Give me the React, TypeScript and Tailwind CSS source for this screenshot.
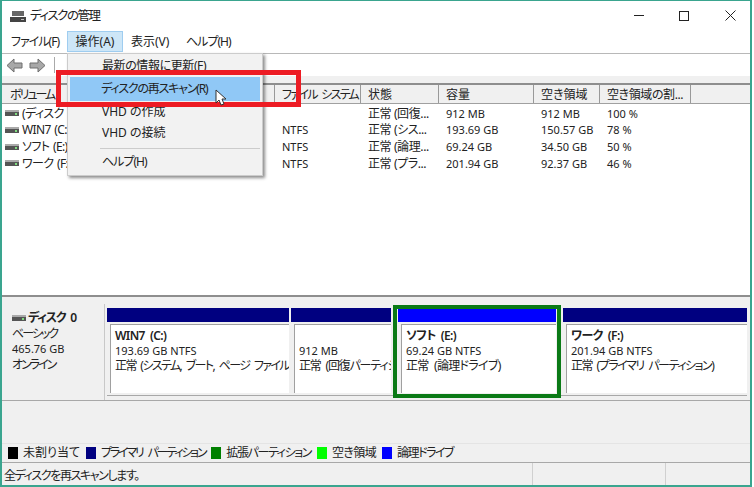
const font = { fontFamily: '"Noto Sans", "Noto Sans CJK JP", sans-serif' };

const columns = [
  { label: "ボリューム", width: "w-[272px]", track: "tracking-[-2px]" },
  { label: "ファイル システム", width: "w-[86px]", track: "tracking-[-1.7px] [word-spacing:3px]" },
  { label: "状態", width: "w-[78px]", track: "" },
  { label: "容量", width: "w-[95px]", track: "" },
  { label: "空き領域", width: "w-[66px]", track: "" },
  { label: "空き領域の割...", width: "w-[91px]", track: "tracking-[-0.4px]" },
];

const rows = [
  ["(ディスク 0 パーティション 2)", "", "正常 (回復...", "912 MB", "912 MB", "100 %"],
  ["WIN7 (C:)", "NTFS", "正常 (シス...", "193.69 GB", "150.57 GB", "78 %"],
  ["ソフト (E:)", "NTFS", "正常 (論理...", "69.24 GB", "34.50 GB", "50 %"],
  ["ワーク (F:)", "NTFS", "正常 (プラ...", "201.94 GB", "92.37 GB", "46 %"],
];

const legend = [
  ["未割り当て", "bg-black", ""],
  ["プライマリ パーティション", "bg-[#000080]", "tracking-[-2.2px] [word-spacing:4px]"],
  ["拡張パーティション", "bg-[#008000]", "tracking-[-1.4px]"],
  ["空き領域", "bg-[#00ff00]", "tracking-[-0.6px]"],
  ["論理ドライブ", "bg-[#0000ff]", "tracking-[-1.5px]"],
];

const DriveIcon = () => (
  <svg width="14" height="8" viewBox="0 0 14 8" className="shrink-0">
    <rect x="0" y="1" width="14" height="6" fill="#555" />
    <rect x="0" y="1" width="14" height="2" fill="#aaa" />
    <rect x="10" y="4" width="2" height="2" fill="#7fdc7f" />
  </svg>
);

const NavArrow = ({ flip }: { flip?: boolean }) => (
  <svg width="17" height="15" viewBox="0 0 17 15" className={flip ? "-scale-x-100" : ""}>
    <path d="M1 7.5 8 1v4h8v5H8v4z" fill="#a8a8a8" stroke="#6e6e6e" strokeWidth="1" />
  </svg>
);

type PartitionProps = {
  name?: string;
  size: string;
  status: string;
  bar: string;
  width: string;
  track: string;
  selected?: boolean;
};

const Partition = ({ name, size, status, bar, width, track, selected }: PartitionProps) => (
  <div className={`${width} relative flex h-full shrink-0 flex-col`}>
    <div className={`${bar} h-[14px] shrink-0`} />
    <div className="ml-[3px] mt-[2px] h-[69px] overflow-hidden whitespace-pre border-t border-l border-[#a0a0a0] bg-white pl-[4px] pt-[3px] leading-[15px] text-[#222]">
      <div className="h-[15px] text-[12px] font-semibold tracking-[-0.6px]">{name}</div>
      <div className="text-[11px]">{size}</div>
      <div className={`text-[12px] ${track}`}>{status}</div>
    </div>
    {selected && <div className="absolute -left-[5px] -right-[5px] -top-[3px] h-[93px] border-[4px] border-[#0b7a16]" />}
  </div>
);

export default function App() {
  return (
    <div style={font} className="relative flex h-[487px] w-[752px] flex-col overflow-hidden border-x-2 border-t border-b-2 border-x-[#3aa58f] border-t-[#3aa58f] border-b-[#3aa58f] bg-white text-[12px] text-[#222] [font-feature-settings:'palt']">
      {/* title bar */}
      <div className="flex h-[29px] shrink-0 items-center pl-[8px]">
        <svg width="16" height="14" viewBox="0 0 16 14" className="mt-[2px]">
          <rect x="2" y="1" width="12" height="5" fill="#666" />
          <rect x="0" y="7" width="16" height="5" fill="#444" />
          <rect x="11" y="9" width="3" height="1" fill="#bbb" />
        </svg>
        <span className="ml-[4px] mt-[2px] text-[12.5px] tracking-[-1.5px]">ディスクの管理</span>
        <div className="-mr-[3px] ml-auto flex h-full items-center">
          <div className="flex w-[45px] justify-center"><div className="h-px w-[10px] bg-[#222]" /></div>
          <div className="flex w-[46px] justify-center"><div className="h-[10px] w-[10px] border border-[#222]" /></div>
          <div className="flex w-[46px] justify-center">
            <svg width="11" height="11" viewBox="0 0 11 11" stroke="#222" fill="none"><path d="M.5.5l10 10M10.5.5l-10 10" /></svg>
          </div>
        </div>
      </div>
      {/* menu bar */}
      <div className="flex h-[24px] shrink-0 items-center border-b border-[#b8b8b8] pl-[2px] text-[12px]">
        <span className="w-[63px] pl-[7px] tracking-[-1px]">ファイル(F)</span>
        <span className="flex h-[21px] w-[56px] items-center justify-center border border-[#9fcdf0] bg-[#cde6f7]">操作(A)</span>
        <span className="w-[55px] pl-[8px]">表示(V)</span>
        <span className="pl-[8px] tracking-[-1px]">ヘルプ(H)</span>
      </div>
      {/* toolbar */}
      <div className="flex h-[22px] shrink-0 items-center gap-[6px] pl-[4px]">
        <NavArrow />
        <NavArrow flip />
        <div className="ml-[2px] h-[16px] w-px bg-[#aaa]" />
      </div>
      <div className="h-[7px] shrink-0 bg-[#f0f0f0]" />
      {/* volume list */}
      <div className="h-[214px] shrink-0 border-y-2 border-[#8e8e8e] bg-white">
        <div className="flex h-[19px] items-center border-b border-[#a0a0a0] bg-[#f0f0f0] pl-[1px] text-[12px]">
          {columns.map((c) => (
            <div key={c.label} className={`${c.width} ${c.track} h-full shrink-0 overflow-hidden whitespace-nowrap border-r border-[#999] pl-[7px] leading-[19px]`}>
              {c.label}
            </div>
          ))}
        </div>
        <div className="pt-[1px]">
          {rows.map((r) => (
            <div key={r[0]} className="flex h-[16.67px] items-center pl-[3px] text-[11px] leading-[17px]">
              <div className="flex w-[270px] shrink-0 items-center gap-[3px]">
                <DriveIcon />
                <span className="text-[12px] tracking-[-0.6px] [word-spacing:1px]">{r[0]}</span>
              </div>
              <div className="w-[86px] shrink-0 pl-[7px]">{r[1]}</div>
              <div className="w-[78px] shrink-0 pl-[7px] text-[12px] tracking-[-0.4px]">{r[2]}</div>
              <div className="w-[95px] shrink-0 pl-[7px]">{r[3]}</div>
              <div className="w-[66px] shrink-0 pl-[7px]">{r[4]}</div>
              <div className="w-[91px] shrink-0 pl-[7px]">{r[5]}</div>
            </div>
          ))}
        </div>
      </div>
      {/* disk pane */}
      <div className="flex min-h-0 flex-1 flex-col bg-[#f0f0f0]">
        <div className="mt-[7px] flex h-[97px] shrink-0 border-b border-[#a8a8a8]">
          <div className="h-[96px] w-[103px] shrink-0 border-r border-[#c8c8c8] pl-[10px] pt-[6px] leading-[15.5px]">
            <div className="flex items-center gap-[2px] font-semibold">
              <DriveIcon />
              <span className="tracking-[-1.2px] [word-spacing:3px]">ディスク 0</span>
            </div>
            <div className="tracking-[-2px]">ベーシック</div>
            <div className="text-[11px]">465.76 GB</div>
            <div className="tracking-[-2px]">オンライン</div>
          </div>
          <div className="ml-[2px] mt-[4px] flex h-[88px] w-[640px] items-start border-b border-[#a8a8a8]">
            <Partition name="WIN7  (C:)" size="193.69 GB NTFS" status="正常 (システム, ブート, ページ ファイル" track="tracking-[-1.6px] [word-spacing:3px]" bar="bg-[#000080]" width="w-[182px]" />
            <Partition size="912 MB" status="正常 (回復パーティション)" track="tracking-[-1.2px] [word-spacing:3px]" bar="bg-[#000080]" width="ml-[2px] w-[100px]" />
            <Partition selected name="ソフト  (E:)" size="69.24 GB NTFS" status="正常 (論理ドライブ)" track="tracking-[-0.7px] [word-spacing:3px]" bar="bg-[#0000ff]" width="ml-[7px] w-[158px]" />
            <Partition name="ワーク  (F:)" size="201.94 GB NTFS" status="正常 (プライマリ パーティション)" track="tracking-[-1.5px] [word-spacing:3px]" bar="bg-[#000080]" width="ml-[7px] w-[184px]" />
          </div>
        </div>
        {/* legend */}
        <div className="mt-auto flex h-[20px] shrink-0 items-center gap-[6px] border-y border-y-[#a8a8a8] border-t-[#e4e4e4] pl-[6px] text-[12px]">
          {legend.map(([label, color, track]) => (
            <div key={label} className="flex items-center gap-[5px]">
              <div className={`${color} h-[12px] w-[10px]`} />
              <span className={track}>{label}</span>
            </div>
          ))}
        </div>
        {/* status bar */}
        <div className="flex h-[22px] shrink-0 items-center pl-[2px] text-[12px]">
          <span className="w-[528px] pt-[3px] tracking-[-1.4px]">全ディスクを再スキャンします。</span>
          <div className="h-full w-[133px] border-l border-[#d0d0d0]" />
          <div className="h-full flex-1 border-l border-[#d0d0d0]" />
        </div>
      </div>
      {/* menu popup */}
      <div className="absolute left-[65px] top-[52px] flex h-[123px] w-[196px] flex-col border border-[#ccc] bg-[#f2f2f2] px-[2px] pt-[1px] text-[12px] shadow-[2px_2px_3px_rgba(0,0,0,0.45)]">
        <div className="flex h-[21px] items-center pl-[32px] tracking-[-0.4px]">最新の情報に更新(F)</div>
        <div className="mt-[1px] flex h-[24px] items-center bg-[#90c8f6] pl-[31px] tracking-[-1.2px]">ディスクの再スキャン(R)</div>
        <div className="flex h-[21px] items-center pl-[32px]">VHD の作成</div>
        <div className="flex h-[22px] items-center pl-[32px]">VHD の接続</div>
        <div className="ml-[30px] mt-[4px] h-px bg-[#ccc]" />
        <div className="flex h-[26px] items-center pl-[32px] tracking-[-1px]">ヘルプ(H)</div>
      </div>
      {/* red highlight */}
      <div className="absolute left-[54px] top-[69px] h-[37px] w-[245px] border-[5px] border-[#ed1c24]" />
      {/* cursor */}
      <svg className="absolute left-[213px] top-[88px]" width="13" height="18" viewBox="0 0 13 18">
        <path d="M1 1v13l3-3 2 5 3-1-2-5h4z" fill="#fff" stroke="#333" strokeWidth="1" />
      </svg>
    </div>
  );
}
